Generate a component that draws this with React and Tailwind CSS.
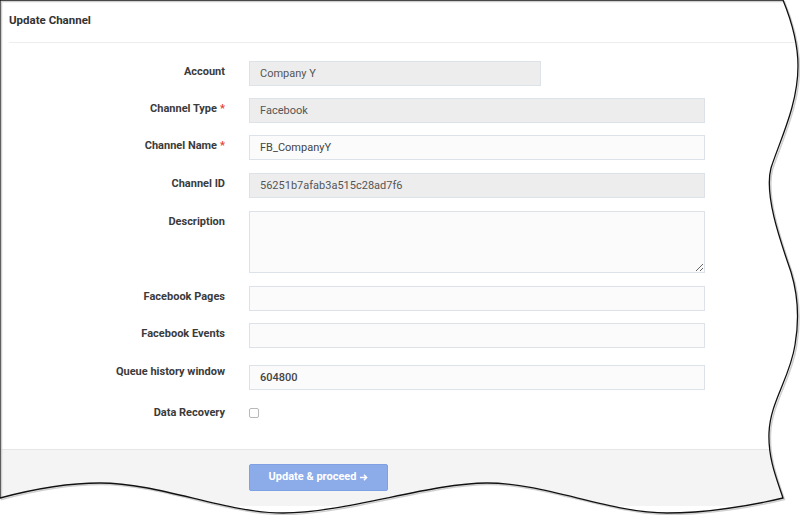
import React from "react";

const rows = [
  { label: "Account", value: "Company Y", disabled: true, width: "w-[292px]", mt: "mt-0" },
  { label: "Channel Type", required: true, value: "Facebook", disabled: true, mt: "mt-[12px]" },
  { label: "Channel Name", required: true, value: "FB_CompanyY", mt: "mt-[12px]" },
  { label: "Channel ID", value: "56251b7afab3a515c28ad7f6", disabled: true, mt: "mt-[13px]" },
];

const rowsAfter = [
  { label: "Facebook Pages", value: "", mt: "mt-[13px]" },
  { label: "Facebook Events", value: "", mt: "mt-[12px]" },
  { label: "Queue history window", value: "604800", strong: true, mt: "mt-[17px]", tight: true },
];

function Label({ children, required, tight }) {
  return (
    <div
      className={`w-[225px] shrink-0 ${tight ? "pt-0" : "pt-[4px]"} text-right text-[11px] leading-[13px] font-bold text-[#3b3b3b]`}
    >
      {children}
      {required && <span className="ml-[3px] text-[#e8403a]">*</span>}
    </div>
  );
}

function Field({ row }) {
  return (
    <div className={`flex ${row.mt}`}>
      <Label required={row.required} tight={row.tight}>
        {row.label}
      </Label>
      <input
        readOnly
        value={row.value}
        className={`ml-[24px] h-[25px] ${row.width || "w-[456px]"} border border-[#dde2e9] px-[10px] text-[11px] outline-none ${
          row.disabled ? "bg-[#ededed] text-[#555]" : "bg-[#fbfbfb] text-[#444]"
        } ${row.strong ? "font-medium text-[#2e2e2e]" : ""}`}
      />
    </div>
  );
}

// torn paper edge drawn over the right and bottom
function TornEdge() {
  const edge =
    "M0,0 L783,0 C792,22 798,44 798,66 C798,105 780,140 771,168 C764,195 780,240 791,272 C798,295 799,322 795,345 C790,378 770,402 769,433 C768,460 778,482 783,498 C750,506 705,513 667,513 C610,513 545,483 487,483 C430,483 345,513 283,513 C225,513 160,483 100,483 C62,483 30,490 0,498 Z";
  return (
    <svg className="pointer-events-none absolute inset-0" width="800" height="515" viewBox="0 0 800 515">
      <path d={`M-5,-5 H805 V520 H-5 Z ${edge}`} fill="#fff" fillRule="evenodd" />
      <path d={edge} fill="none" stroke="#cfcfcf" strokeWidth="1.5" transform="translate(1.5 1.5)" />
      <path d={edge} fill="none" stroke="#111" strokeWidth="1.3" />
    </svg>
  );
}

export default function App() {
  return (
    <div className="relative h-[515px] w-[800px] overflow-hidden bg-white font-['Roboto',sans-serif]">
      <header className="flex h-[42px] items-center px-[9px]">
        <h1 className="text-[11.5px] font-bold text-[#333]">Update Channel</h1>
      </header>
      <div className="ml-[9px] h-px bg-[#ededed]" />

      <form className="flex flex-col pt-[18px]">
        {rows.map((r) => (
          <Field key={r.label} row={r} />
        ))}

        <div className="mt-[13px] flex">
          <Label>Description</Label>
          <textarea
            readOnly
            className="ml-[24px] h-[62px] w-[456px] border border-[#dde2e9] bg-[#fbfbfb] outline-none"
          />
        </div>

        {rowsAfter.map((r) => (
          <Field key={r.label} row={r} />
        ))}

        <div className="mt-[12px] flex h-[47px]">
          <Label>Data Recovery</Label>
          <span className="ml-[24px] mt-[6px] h-[10px] w-[10px] rounded-[2px] border border-[#b8b8b8] bg-white" />
        </div>
      </form>

      <footer className="h-[57px] border-t border-[#e6e6e6] bg-[#f4f4f4] pt-[14px]">
        <button
          type="button"
          className="ml-[249px] flex h-[27px] w-[139px] items-center justify-center gap-[3px] rounded-[2px] border border-[#7fa1e4] bg-[#8cabe9] text-[11px] font-bold text-white"
        >
          Update &amp; proceed
          <svg width="9" height="9" viewBox="0 0 10 10" fill="none" stroke="#fff" strokeWidth="1.6">
            <path d="M1 5h7.5M5.5 2l3 3-3 3" />
          </svg>
        </button>
      </footer>

      <TornEdge />
    </div>
  );
}
